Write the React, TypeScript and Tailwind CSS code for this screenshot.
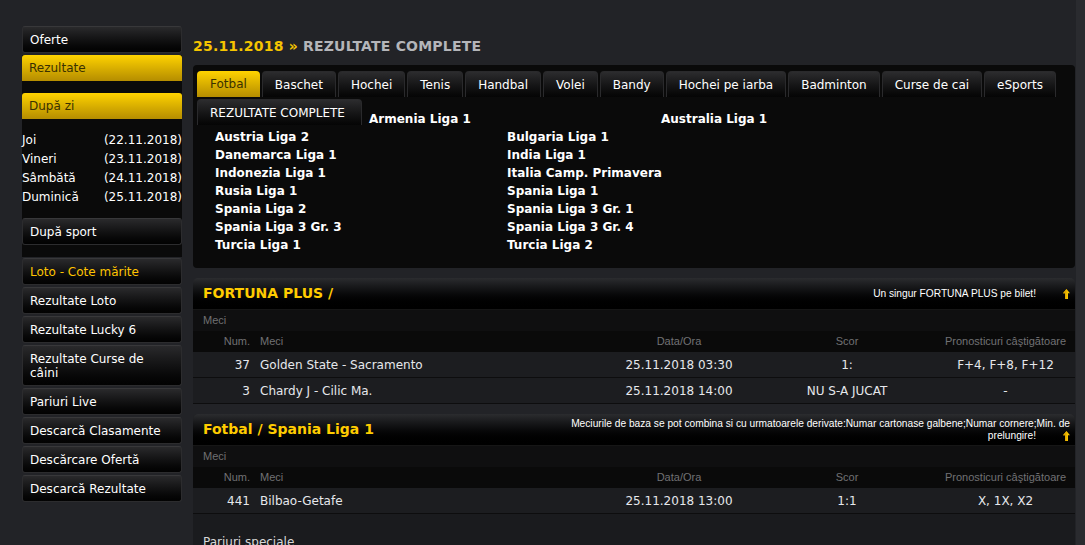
import React from "react";

const sideButtons = [
  "Rezultate Loto",
  "Rezultate Lucky 6",
  "Rezultate Curse de câini",
  "Pariuri Live",
  "Descarcă Clasamente",
  "Descărcare Ofertă",
  "Descarcă Rezultate",
];

const days = [
  ["Joi", "(22.11.2018)"],
  ["Vineri", "(23.11.2018)"],
  ["Sâmbătă", "(24.11.2018)"],
  ["Duminică", "(25.11.2018)"],
];

const tabs = [
  "Fotbal",
  "Baschet",
  "Hochei",
  "Tenis",
  "Handbal",
  "Volei",
  "Bandy",
  "Hochei pe iarba",
  "Badminton",
  "Curse de cai",
  "eSports",
];

const leagues = [
  "Austria Liga 2",
  "Bulgaria Liga 1",
  "Danemarca Liga 1",
  "India Liga 1",
  "Indonezia Liga 1",
  "Italia Camp. Primavera",
  "Rusia Liga 1",
  "Spania Liga 1",
  "Spania Liga 2",
  "Spania Liga 3 Gr. 1",
  "Spania Liga 3 Gr. 3",
  "Spania Liga 3 Gr. 4",
  "Turcia Liga 1",
  "Turcia Liga 2",
];

type Match = { num: string; name: string; date: string; score: string; tips: string };

const darkBtn =
  "flex items-center px-[7px] rounded-[3px] border border-[#2c2c2e] border-t-[#38383a] bg-linear-to-b from-[#2a2a2c] to-[#020202] text-white text-[12px]";
const yellowBtn =
  "flex items-center h-[26px] px-[7px] rounded-t-[3px] bg-linear-to-b from-[#ffd300] to-[#b58d00] text-[#3a3100] text-[12px]";

function UpArrow() {
  return (
    <svg width="7" height="10" viewBox="0 0 7 10" className="inline-block">
      <polygon points="3.5,0 7,4.2 5,4.2 5,10 2,10 2,4.2 0,4.2" fill="#f7c400" />
      <polygon points="3.5,0 3.5,10 2,10 2,4.2 0,4.2" fill="#e0a800" />
    </svg>
  );
}

function Sidebar() {
  return (
    <div className="w-[160px] shrink-0 pt-[26px] flex flex-col">
      <div className={`${darkBtn} h-[27px]`}>Oferte</div>
      <div className="mt-[2px] bg-[#0a0a0a] pb-[12px]">
        <div className={yellowBtn}>Rezultate</div>
        <div className={`${yellowBtn} mt-[12px]`}>După zi</div>
        <div className="pt-[12px] pb-[11px]">
          {days.map(([d, date]) => (
            <div key={d} className="flex justify-between text-white text-[12px] leading-[19px]">
              <span>{d}</span>
              <span>{date}</span>
            </div>
          ))}
        </div>
        <div className={`${darkBtn} h-[27px]`}>După sport</div>
      </div>
      <div className="mt-[1px] flex flex-col gap-[2px]">
        <div className={`${darkBtn} h-[27px] !text-[#ffc400]`}>Loto - Cote mărite</div>
        {sideButtons.map((b) => (
          <div
            key={b}
            className={`${darkBtn} ${b.includes("câini") ? "h-[41px] leading-[14px]" : "h-[27px]"}`}
          >
            {b}
          </div>
        ))}
      </div>
    </div>
  );
}

function TabsPanel() {
  return (
    <div className="rounded-[4px] bg-[#0a0a0a] pt-[6px] pl-[4px] pb-[14px]">
      <div className="flex gap-[2px]">
        {tabs.map((t, i) => (
          <div
            key={t}
            className={
              i === 0
                ? "h-[26px] flex items-center px-[13px] rounded-t-[4px] bg-linear-to-b from-[#ffd300] to-[#b58d00] text-[#3a3100] text-[12px]"
                : "h-[26px] flex items-center px-[12px] rounded-t-[4px] border border-b-0 border-[#2a2a2c] bg-linear-to-b from-[#2c2c2e] to-[#050505] text-white text-[12px]"
            }
          >
            {t}
          </div>
        ))}
      </div>
      <div className="mt-[2px] flex items-end h-[29px]">
        <div className="self-start h-[26px] w-[165px] flex items-center px-[12px] rounded-t-[4px] border border-b-0 border-[#2a2a2c] bg-linear-to-b from-[#2c2c2e] to-[#050505] text-white text-[12px]">
          REZULTATE COMPLETE
        </div>
        <div className="ml-[7px] w-[292px] text-white font-bold text-[12px] leading-[18px]">Armenia Liga 1</div>
        <div className="w-[292px] text-white font-bold text-[12px] leading-[18px]">Australia Liga 1</div>
      </div>
      <div className="grid grid-cols-[292px_292px] pl-[18px]">
        {leagues.map((l) => (
          <div key={l} className="text-white font-bold text-[12px] leading-[18px]">
            {l}
          </div>
        ))}
      </div>
    </div>
  );
}

const cols = "grid grid-cols-[62px_345px_158px_178px_139px]";

function Section({
  title,
  notice,
  matches,
  extra,
}: {
  title: string;
  notice: React.ReactNode;
  matches: Match[];
  extra?: boolean;
}) {
  return (
    <div className={`rounded-t-[5px] overflow-hidden ${extra ? "bg-[#1a1b1e]" : ""}`}>
      <div className="h-[32px] flex items-center justify-between pl-[10px] pr-[5px] bg-linear-to-b from-[#2b2c2f] to-[#000] border-b border-[#161616]">
        <span className="text-[#ffcc00] font-bold text-[14px]">{title}</span>
        <div className="text-right text-white text-[10.2px] leading-[12px] font-['Liberation_Sans',Arial,sans-serif] whitespace-nowrap">
          {notice}
        </div>
      </div>
      <div className="h-[21px] flex items-center pl-[10px] bg-[#0f0f10] text-[#6f6f72] text-[11px] font-['Liberation_Sans',Arial,sans-serif]">
        Meci
      </div>
      <div
        className={`${cols} h-[21px] items-center bg-[#0a0a0a] text-[#717174] text-[11px] font-['Liberation_Sans',Arial,sans-serif]`}
      >
        <span className="text-right pr-[5px]">Num.</span>
        <span className="pl-[5px]">Meci</span>
        <span className="text-center">Data/Ora</span>
        <span className="text-center">Scor</span>
        <span className="text-center">Pronosticuri câştigătoare</span>
      </div>
      {matches.map((m) => (
        <div
          key={m.num}
          className={`${cols} h-[26px] items-center bg-[#1c1d20] border-b border-[#0d0d0e] text-[#e6e8ec] text-[12px]`}
        >
          <span className="text-right pr-[5px]">{m.num}</span>
          <span className="pl-[5px]">{m.name}</span>
          <span className="text-center">{m.date}</span>
          <span className="text-center">{m.score}</span>
          <span className="text-center">{m.tips}</span>
        </div>
      ))}
      {extra && (
        <div className="pt-[20px] pl-[10px] text-[#d8d8d8] text-[12px] leading-[16px] h-[60px]">
          Pariuri speciale
        </div>
      )}
    </div>
  );
}

export default function App() {
  return (
    <div className="min-h-screen bg-[#222327] flex font-['DejaVu_Sans',Verdana,sans-serif]">
      <div className="flex gap-[11px] pl-[22px]">
        <Sidebar />
        <div className="w-[882px] pt-[37px] pb-[20px]">
          <h1 className="text-[14px] leading-[18px] font-bold tracking-[0.2px] mb-[10px]">
            <span className="text-[#f5c400]">25.11.2018 » </span>
            <span className="text-[#b4b5b9]">REZULTATE COMPLETE</span>
          </h1>
          <TabsPanel />
          <div className="mt-[10px]">
            <Section
              title="FORTUNA PLUS /"
              notice={
                <span className="flex items-center gap-[27px]">
                  Un singur FORTUNA PLUS pe bilet!
                  <UpArrow />
                </span>
              }
              matches={[
                { num: "37", name: "Golden State - Sacramento", date: "25.11.2018 03:30", score: "1:", tips: "F+4, F+8, F+12" },
                { num: "3", name: "Chardy J - Cilic Ma.", date: "25.11.2018 14:00", score: "NU S-A JUCAT", tips: "-" },
              ]}
            />
          </div>
          <div className="mt-[10px]">
            <Section
              title="Fotbal / Spania Liga 1"
              extra
              notice={
                <>
                  Meciurile de baza se pot combina si cu urmatoarele derivate:Numar cartonase galbene;Numar cornere;Min. de
                  <br />
                  <span className="inline-flex items-center gap-[27px]">
                    prelungire!
                    <UpArrow />
                  </span>
                </>
              }
              matches={[
                { num: "441", name: "Bilbao-Getafe", date: "25.11.2018 13:00", score: "1:1", tips: "X, 1X, X2" },
              ]}
            />
          </div>
        </div>
      </div>
      <div className="ml-auto w-[9px] bg-[#2a2b2f]" />
    </div>
  );
}
